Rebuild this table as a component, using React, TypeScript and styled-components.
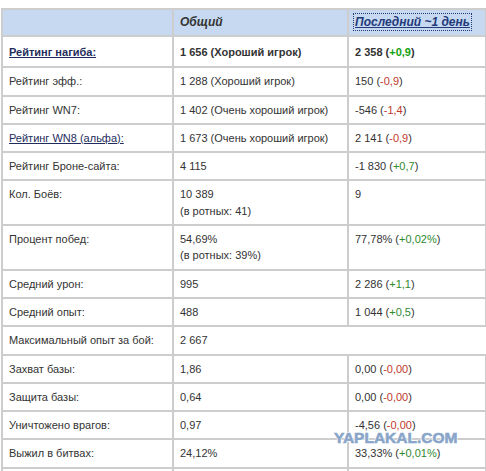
import React from 'react';
import styled, { createGlobalStyle } from 'styled-components';

const GlobalStyle = createGlobalStyle`
    body {
        margin: 0;
        background: #ffffff;
        font-family: "Liberation Sans", Arial, sans-serif;
    }
`;

const Page = styled.div`
    position: relative;
    width: 486px;
    padding: 8px 0 0 1px;
`;

const StatTable = styled.table`
    border-collapse: collapse;
    table-layout: fixed;
    width: 484px;
    font-size: 11px;
    color: #333333;
`;

const HeadCell = styled.th`
    background-color: #c6d9f0;
    border: 2px solid #cdcdcd;
    border-bottom: none;
    padding: 4px 6px 5px;
    line-height: 16px;
    text-align: left;
    font-size: 12px;
    font-style: italic;
    font-weight: bold;
    color: #333333;

    & + & {
        border-left-color: #bccfe6;
    }
`;

const HeadLink = styled.a`
    color: #22397a;
    text-decoration: underline;
    outline: 1px dotted #22397a;
    outline-offset: 1px;
`;

const Cell = styled.td<{ $strong?: boolean; $open?: boolean }>`
    border: 2px solid #cdcdcd;
    border-right: ${({ $open }) => ($open ? 'none' : '2px solid #cdcdcd')};
    padding: ${({ $strong }) => ($strong ? '7px 6px 6px' : '5px 6px 5px')};
    line-height: 16.3px;
    vertical-align: top;
    font-weight: ${({ $strong }) => ($strong ? 'bold' : 'normal')};
    white-space: nowrap;
`;

const Label = styled.a`
    color: #1f2d5c;
    text-decoration: underline;
`;

const Delta = styled.span<{ $up: boolean }>`
    color: ${({ $up }) => ($up ? '#2f8a2f' : '#c0392b')};
`;

const StrongDelta = styled(Delta)`
    color: ${({ $up }) => ($up ? '#11a011' : '#c0392b')};
`;

const Watermark = styled.div`
    position: absolute;
    left: 334px;
    top: 430px;
    font-family: "Liberation Sans", Arial, sans-serif;
    font-size: 15.5px;
    line-height: 16px;
    font-weight: 900;
    color: #89a5c9;
    -webkit-text-stroke: 0.6px #89a5c9;
    text-shadow: 1px 0 0 #fff, -1px 0 0 #fff, 0 1px 0 #fff, 0 -1px 0 #fff;
    pointer-events: none;
`;

type Row = {
    label: string;
    link?: boolean;
    strong?: boolean;
    total: string[];
    day?: { value: string; delta?: string };
};

const rows: Row[] = [
    { label: 'Рейтинг нагиба:', link: true, strong: true, total: ['1 656 (Хороший игрок)'], day: { value: '2 358', delta: '+0,9' } },
    { label: 'Рейтинг эфф.:', total: ['1 288 (Хороший игрок)'], day: { value: '150', delta: '-0,9' } },
    { label: 'Рейтинг WN7:', total: ['1 402 (Очень хороший игрок)'], day: { value: '-546', delta: '-1,4' } },
    { label: 'Рейтинг WN8 (альфа):', link: true, total: ['1 673 (Очень хороший игрок)'], day: { value: '2 141', delta: '-0,9' } },
    { label: 'Рейтинг Броне-сайта:', total: ['4 115'], day: { value: '-1 830', delta: '+0,7' } },
    { label: 'Кол. Боёв:', total: ['10 389', '(в ротных: 41)'], day: { value: '9' } },
    { label: 'Процент побед:', total: ['54,69%', '(в ротных: 39%)'], day: { value: '77,78%', delta: '+0,02%' } },
    { label: 'Средний урон:', total: ['995'], day: { value: '2 286', delta: '+1,1' } },
    { label: 'Средний опыт:', total: ['488'], day: { value: '1 044', delta: '+0,5' } },
    { label: 'Максимальный опыт за бой:', total: ['2 667'] },
    { label: 'Захват базы:', total: ['1,86'], day: { value: '0,00', delta: '-0,00' } },
    { label: 'Защита базы:', total: ['0,64'], day: { value: '0,00', delta: '-0,00' } },
    { label: 'Уничтожено врагов:', total: ['0,97'], day: { value: '-4,56', delta: '-0,00' } },
    { label: 'Выжил в битвах:', total: ['24,12%'], day: { value: '33,33%', delta: '+0,01%' } },
    { label: 'Обнаружено врагов:', total: ['1,42'], day: { value: '0,00', delta: '-0,00' } },
];

function DayValue({ value, delta, strong }: { value: string; delta?: string; strong?: boolean }) {
    if (!delta) return <>{value}</>;
    const up = delta.startsWith('+');
    const Mark = strong ? StrongDelta : Delta;
    return (
        <>
            {value} (<Mark $up={up}>{delta}</Mark>)
        </>
    );
}

export default function App(): JSX.Element {
    return (
        <Page>
            <GlobalStyle />
            <StatTable>
                <colgroup>
                    <col style={{ width: 171 }} />
                    <col style={{ width: 175 }} />
                    <col style={{ width: 138 }} />
                </colgroup>
                <thead>
                    <tr>
                        <HeadCell />
                        <HeadCell>Общий</HeadCell>
                        <HeadCell>
                            <HeadLink>Последний ~1 день</HeadLink>
                        </HeadCell>
                    </tr>
                </thead>
                <tbody>
                    {rows.map((row) => (
                        <tr key={row.label}>
                            <Cell $strong={row.strong}>
                                {row.link ? <Label>{row.label}</Label> : row.label}
                            </Cell>
                            <Cell $strong={row.strong} colSpan={row.day ? 1 : 2} $open={!row.day}>
                                {row.total.map((line, i) => (
                                    <div key={i}>{line}</div>
                                ))}
                            </Cell>
                            {row.day && (
                                <Cell $strong={row.strong}>
                                    <DayValue {...row.day} strong={row.strong} />
                                </Cell>
                            )}
                        </tr>
                    ))}
                </tbody>
            </StatTable>
            <Watermark>YAPLAKAL.COM</Watermark>
        </Page>
    );
}
